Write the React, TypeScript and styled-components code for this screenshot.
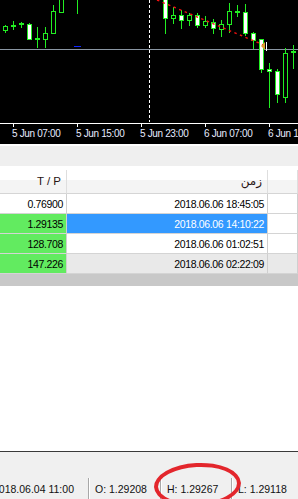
import styled, { createGlobalStyle } from "styled-components";

const GlobalStyle = createGlobalStyle`
  html, body {
    margin: 0;
    padding: 0;
    overflow: hidden;
    background: #fff;
  }
  body {
    font-family: "Liberation Sans", Arial, sans-serif;
  }
`;

type Kind = "bull" | "bear" | "doji";
type Candle = { x: number; top: number; bottom: number; hi: number; lo: number; kind: Kind };

const CANDLES: Candle[] = [
  { x: 3, top: 26, bottom: 30, hi: 25, lo: 32, kind: "bull" },
  { x: 11, top: 26, bottom: 26, hi: 21, lo: 29, kind: "doji" },
  { x: 19, top: 24, bottom: 24, hi: 22, lo: 27, kind: "doji" },
  { x: 27, top: 24, bottom: 39, hi: 23, lo: 39, kind: "bear" },
  { x: 35, top: 39, bottom: 39, hi: 27, lo: 47, kind: "doji" },
  { x: 43, top: 33, bottom: 39, hi: 27, lo: 47, kind: "bull" },
  { x: 51, top: 11, bottom: 33, hi: 5, lo: 33, kind: "bull" },
  { x: 59, top: -2, bottom: 12, hi: -4, lo: 12, kind: "bull" },
  { x: 75, top: -20, bottom: -4, hi: -24, lo: 13, kind: "bull" },
  { x: 163, top: -2, bottom: 18, hi: -4, lo: 33, kind: "bear" },
  { x: 171, top: 15, bottom: 18, hi: 7, lo: 23, kind: "bull" },
  { x: 179, top: 15, bottom: 20, hi: 10, lo: 28, kind: "bear" },
  { x: 187, top: 15, bottom: 20, hi: 13, lo: 25, kind: "bull" },
  { x: 195, top: 15, bottom: 25, hi: 13, lo: 27, kind: "bear" },
  { x: 203, top: 21, bottom: 25, hi: 16, lo: 27, kind: "bull" },
  { x: 211, top: 22, bottom: 28, hi: 19, lo: 33, kind: "bear" },
  { x: 219, top: 24, bottom: 29, hi: 20, lo: 36, kind: "bull" },
  { x: 227, top: 11, bottom: 24, hi: 3, lo: 32, kind: "bull" },
  { x: 235, top: 12, bottom: 12, hi: 5, lo: 16, kind: "doji" },
  { x: 243, top: 12, bottom: 33, hi: 4, lo: 35, kind: "bear" },
  { x: 251, top: 33, bottom: 40, hi: 32, lo: 48, kind: "bear" },
  { x: 259, top: 39, bottom: 69, hi: 39, lo: 72, kind: "bear" },
  { x: 267, top: 69, bottom: 71, hi: 63, lo: 107, kind: "bear" },
  { x: 275, top: 71, bottom: 94, hi: 69, lo: 102, kind: "bear" },
  { x: 283, top: 53, bottom: 97, hi: 48, lo: 102, kind: "bull" },
  { x: 291, top: 52, bottom: 52, hi: 45, lo: 68, kind: "doji" },
];

const TICKS = [
  { x: 13, label: "5 Jun 07:00" },
  { x: 77, label: "5 Jun 15:00" },
  { x: 141, label: "5 Jun 23:00" },
  { x: 205, label: "6 Jun 07:00" },
  { x: 269, label: "6 Jun 11:00" },
];

const ROWS = [
  { tp: "0.76900", tpBg: "#ffffff", time: "2018.06.06 18:45:05", bg: "#ffffff", fg: "#000", rest: "#ffffff" },
  { tp: "1.29135", tpBg: "#62eb60", time: "2018.06.06 14:10:22", bg: "#3399ff", fg: "#fff", rest: "#ffffff" },
  { tp: "128.708", tpBg: "#62eb60", time: "2018.06.06 01:02:51", bg: "#ffffff", fg: "#000", rest: "#ffffff" },
  { tp: "147.226", tpBg: "#62eb60", time: "2018.06.06 02:22:09", bg: "#e9e9e9", fg: "#000", rest: "#e9e9e9" },
];

const STATUS = [
  { text: "2018.06.04 11:00", width: 95, first: true },
  { text: "O: 1.29208", width: 72 },
  { text: "H: 1.29267", width: 71 },
  { text: "L: 1.29118", width: 80 },
];

const LIME = "#22ee22";

const CandleShape = ({ c }: { c: Candle }) => {
  const cx = c.x + 2.5;
  return (
    <g>
      <line x1={cx} x2={cx} y1={c.hi} y2={c.lo + 1} stroke={LIME} strokeWidth={1} />
      {c.kind === "doji" ? (
        <rect x={c.x} y={c.top - 1} width={5} height={2} fill={LIME} />
      ) : (
        <rect
          x={c.x + 0.5}
          y={c.top + 0.5}
          width={4}
          height={c.bottom - c.top}
          fill={c.kind === "bear" ? "#ffffff" : "#000000"}
          stroke={LIME}
          strokeWidth={1}
        />
      )}
    </g>
  );
};

const Chart = () => (
  <ChartPanel>
    <svg width={298} height={144} viewBox="0 0 298 144">
      <line x1={0} x2={298} y1={49.5} y2={49.5} stroke="#8a96a3" strokeWidth={1} />
      <line x1={149.5} x2={149.5} y1={0} y2={122} stroke="#ffffff" strokeWidth={1} strokeDasharray="3 2" />
      <line x1={74} x2={81} y1={46.5} y2={46.5} stroke="#1028ff" strokeWidth={1} />
      {CANDLES.map((c) => (
        <CandleShape key={c.x} c={c} />
      ))}
      <line x1={157} y1={0} x2={266} y2={46} stroke="#f01010" strokeWidth={1.4} strokeDasharray="2.5 3.5" />
      <polygon points="261,46 265,42 265,50" fill="#e0a030" />
      <line x1={266.5} x2={266.5} y1={42} y2={51} stroke="#ffffff" strokeWidth={1} />
      <line x1={0} x2={298} y1={123.5} y2={123.5} stroke="#ffffff" strokeWidth={1} />
      {TICKS.map((t) => (
        <g key={t.x}>
          <line x1={t.x + 0.5} x2={t.x + 0.5} y1={124} y2={127} stroke="#ffffff" strokeWidth={1} />
          <AxisLabel x={t.x - 1} y={137}>
            {t.label}
          </AxisLabel>
        </g>
      ))}
    </svg>
  </ChartPanel>
);

export default function App() {
  return (
    <>
      <GlobalStyle />
      <Page>
        <Chart />
        <ChartEdge />
        <TabStrip />
        <TableGap />
        <Grid>
          <HeaderCell>T / P</HeaderCell>
          <HeaderCell $arabic>زمن</HeaderCell>
          <HeaderCell />
          {ROWS.map((r) => (
            <Row key={r.time}>
              <Cell $bg={r.tpBg} $fg="#000">
                {r.tp}
              </Cell>
              <Cell $bg={r.bg} $fg={r.fg}>
                {r.time}
              </Cell>
              <Cell $bg={r.rest} $fg="#000" />
            </Row>
          ))}
        </Grid>
        <TotalBar />
        <Blank />
        <StatusBar>
          {STATUS.map((s) => (
            <StatusCell key={s.text} $w={s.width} $first={!!s.first}>
              {s.text}
            </StatusCell>
          ))}
        </StatusBar>
        <Marker />
      </Page>
    </>
  );
}

const Page = styled.div`
  position: relative;
  width: 298px;
  height: 499px;
  display: flex;
  flex-direction: column;
  background: #fff;
  overflow: hidden;
`;

const ChartPanel = styled.div`
  height: 144px;
  background: #000;
  flex-shrink: 0;
  svg {
    display: block;
  }
`;

const AxisLabel = styled.text`
  font-family: "Liberation Sans", Arial, sans-serif;
  font-size: 10px;
  letter-spacing: -0.35px;
  fill: #e6ecff;
`;

const ChartEdge = styled.div`
  height: 2px;
  background: #fff;
`;

const TabStrip = styled.div`
  height: 20px;
  background: #efefef;
`;

const TableGap = styled.div`
  height: 4px;
  background: #fff;
`;

const Grid = styled.div`
  display: grid;
  grid-template-columns: 67px 201px 1fr;
`;

const HeaderCell = styled.div<{ $arabic?: boolean }>`
  height: 24px;
  box-sizing: border-box;
  padding: 0 5px 2px 0;
  display: flex;
  align-items: center;
  justify-content: flex-end;
  background: linear-gradient(#ffffff 0 45%, #f4f4f4 45% 100%);
  border-right: 1px solid #dedede;
  border-bottom: 1px solid #d5d5d5;
  font-family: ${(p) => (p.$arabic ? '"DejaVu Sans", sans-serif' : '"Liberation Sans", Arial, sans-serif')};
  font-size: ${(p) => (p.$arabic ? "12px" : "11.5px")};
  color: #2a1414;
`;

const Row = styled.div`
  display: contents;
`;

const Cell = styled.div<{ $bg: string; $fg: string }>`
  height: 20px;
  box-sizing: border-box;
  padding-right: 3px;
  display: flex;
  align-items: center;
  justify-content: flex-end;
  background: ${(p) => p.$bg};
  color: ${(p) => p.$fg};
  border-right: 1px solid #cfcfcf;
  border-bottom: 1px solid #d4d4d4;
  font-size: 10.5px;
  letter-spacing: -0.35px;
`;

const TotalBar = styled.div`
  height: 12px;
  background: #c8c8c8;
`;

const Blank = styled.div`
  flex: 1;
  background: #fff;
`;

const StatusBar = styled.div`
  height: 48px;
  flex-shrink: 0;
  box-sizing: border-box;
  border-top: 1px solid #3a3a3a;
  background: #f0f0f0;
  display: flex;
  align-items: flex-end;
`;

const StatusCell = styled.div<{ $w: number; $first: boolean }>`
  width: ${(p) => p.$w}px;
  flex-shrink: 0;
  height: 21px;
  box-sizing: border-box;
  margin-left: ${(p) => (p.$first ? "-7px" : "0")};
  padding-left: ${(p) => (p.$first ? "0" : "6px")};
  border-left: ${(p) => (p.$first ? "none" : "1px solid #a8a8a8")};
  box-shadow: ${(p) => (p.$first ? "none" : "inset 1px 0 #ffffff")};
  display: flex;
  align-items: center;
  font-size: 10.5px;
  color: #101010;
  white-space: nowrap;
`;

const Marker = styled.div`
  position: absolute;
  left: 154px;
  top: 463px;
  width: 87px;
  height: 44px;
  box-sizing: border-box;
  border: 4px solid #e3262c;
  border-radius: 50%;
  transform: rotate(-3deg);
`;
